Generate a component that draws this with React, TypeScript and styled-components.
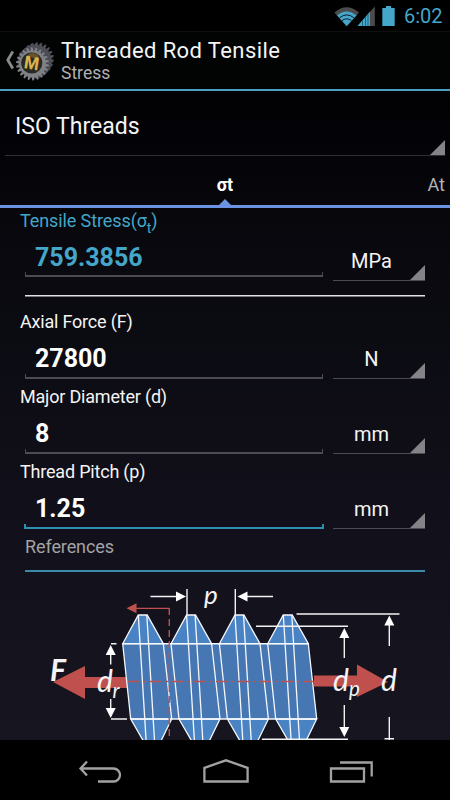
import React from 'react';
import styled, { createGlobalStyle } from 'styled-components';

const Colors = {
  holo: '#44a6c9',
  tab: '#6c93e2',
  white: '#f4f4f4',
  gray: '#a3a3a5',
  line: '#4b4b50',
  red: '#c0504d',
  blue: '#4777b3',
  tooth: '#4a83c4',
};

type FieldData = {
  label: React.ReactNode;
  value: string;
  unit: string;
  result?: boolean;
  focused?: boolean;
};

const result: FieldData = {
  label: (
    <>
      Tensile Stress(σ<sub>t</sub>)
    </>
  ),
  value: '759.3856',
  unit: 'MPa',
  result: true,
};

const inputs: FieldData[] = [
  { label: 'Axial Force (F)', value: '27800', unit: 'N' },
  { label: 'Major Diameter (d)', value: '8', unit: 'mm' },
  { label: 'Thread Pitch (p)', value: '1.25', unit: 'mm', focused: true },
];

const Field: React.FC<FieldData> = ({ label, value, unit, result, focused }) => (
  <Group $result={result}>
    <Label $result={result}>{label}</Label>
    <FieldRow>
      <Input $result={result} $focused={focused}>
        <span>{value}</span>
      </Input>
      <Unit $result={result}>
        {unit}
        <Corner />
      </Unit>
    </FieldRow>
  </Group>
);

const StatusIcons = () => (
  <svg width="64" height="22" viewBox="333 4 64 22">
    <path d="M334.5 11.5Q346.5 1 359 11.5L356.2 15Q346.5 7.5 337.3 15Z" fill="#4b4b4b" />
    <path d="M337 14.5Q346.5 6.5 356.5 14.5L346.7 25.3Z" fill={Colors.holo} />
    <path d="M339.5 16.8Q346.7 11 354 16.8M342 19.7Q346.7 16 351.5 19.7" stroke="#0b1e27" fill="none" />
    <path d="M374.8 5.5V25H357.5Z" fill="#4b4b4b" />
    <path d="M370 10.8V25H357.5Z" fill={Colors.holo} />
    <path d="M362.5 19V25M365.5 16V25M368 13V25" stroke="#13485e" strokeWidth=".7" />
    <path d="M386 5h5v2h3.7v18H382.3V7H386Z" fill={Colors.holo} />
  </svg>
);

const teeth = Array.from({ length: 22 }, (_, i) => (i * Math.PI * 2) / 22);
const gearPoints = (cx: number, cy: number) =>
  teeth
    .map(a => {
      const at = (r: number, d: number) =>
        `${(cx + r * Math.cos(a + d)).toFixed(2)},${(cy + r * Math.sin(a + d)).toFixed(2)}`;
      return [at(13.4, 0), at(16.6, 0.06), at(16.6, 0.15), at(13.4, 0.21)].join(' ');
    })
    .join(' ');

const GearLogo = () => (
  <svg width="40" height="42" viewBox="15 40 40 42">
    {[5, 4, 3, 2, 1].map(i => (
      <polygon key={i} points={gearPoints(32.5 + i, 63.8 - i)} fill={i % 2 ? '#43444c' : '#55565f'} />
    ))}
    <polygon points={gearPoints(32.5, 63.8)} fill="#808186" />
    <circle cx="31.8" cy="63" r="10.6" fill="#2a2824" />
    <path d="M26 56.5Q32 50 39 56L37 60L31 57Z" fill="#665528" />
    <text x="24.6" y="69.8" transform="rotate(9 32 63)" fontFamily="Liberation Sans" fontWeight="700" fontSize="18" fill="#806321">
      M
    </text>
    <text x="24" y="69" transform="rotate(9 32 63)" fontFamily="Liberation Sans" fontWeight="700" fontSize="18" fill="#d8b550">
      M
    </text>
  </svg>
);

const Head: React.FC<{ x: number; y: number; r: number; color?: string }> = ({
  x,
  y,
  r,
  color = '#fff',
}) => <path d="M0 0L-5 10H5Z" transform={`translate(${x} ${y}) rotate(${r})`} fill={color} />;

const ThreadDiagram = () => {
  const starts = [0, 48.3, 96.7, 145];
  return (
    <svg width="450" height="168" viewBox="0 572 450 168">
      <path d="M53 682L85 666V677H128V688H85V699Z" fill={Colors.red} />
      <path d="M314 675.5H357V664.5L388 682L357 697V686.5H314Z" fill={Colors.red} />
      <polygon points="122.7,643.7 308.3,643.7 317,719 130.7,719" fill={Colors.blue} />
      {starts.map(s => (
        <g key={s} transform={`translate(${s} 0)`} stroke="#f5f8fc" strokeWidth="1.3">
          <path d="M122.7 643.7L138.3 615H147.2L163.3 643.7Z" fill={Colors.tooth} />
          <path d="M130.7 719L144.5 743H160L171.7 719Z" fill={Colors.tooth} />
          <path d="M138.3 615L146.2 742M146.8 615L154.6 742" />
          <path d="M122.7 643.7L130.7 719M163.3 643.7L171.7 719" />
        </g>
      ))}
      <path d="M122.7 643.7H308.3M130.7 719H317" stroke="#f5f8fc" strokeWidth="1.4" />
      <path d="M128 681.5H314" stroke={Colors.red} strokeWidth="1.4" strokeDasharray="11 4 3 4" />
      <path d="M136 608.3H169" stroke={Colors.red} strokeWidth="1.3" />
      <path d="M169.3 608V740" stroke={Colors.red} strokeWidth="1.4" strokeDasharray="7 4" />
      <Head x={126.5} y={608.3} r={-90} color={Colors.red} />
      <g stroke="#f2f2f2" strokeWidth="1.4">
        <path d="M150.5 596.5H178M187 589V615M235.3 589V615M246 596.5H273" />
        <path d="M111 643.7H116.5M111 719H127M110.7 652V664.5M110.7 699V710" />
        <path d="M296.5 614H399.5M256 626.3H348M262 739.3H348" />
        <path d="M344.3 636V658M344.3 705V728M389.3 624V646M389.3 717V740M384.5 738.8H394" />
      </g>
      <Head x={186} y={596.5} r={90} />
      <Head x={237.5} y={596.5} r={-90} />
      <Head x={110.7} y={645} r={0} />
      <Head x={110.7} y={718} r={180} />
      <Head x={344.3} y={628} r={0} />
      <Head x={344.3} y={737} r={180} />
      <Head x={389.3} y={615.5} r={0} />
      <DiagramText x="50" y="681" $bold>F</DiagramText>
      <DiagramText x="97" y="692">d</DiagramText>
      <DiagramText x="112.500" y="697.500" $small>r</DiagramText>
      <DiagramText x="204" y="604" $mid>p</DiagramText>
      <DiagramText x="333" y="690.500">d</DiagramText>
      <DiagramText x="349" y="695.500" $small>p</DiagramText>
      <DiagramText x="381" y="690.500">d</DiagramText>
    </svg>
  );
};

const App = () => (
  <Screen>
    <GlobalStyle />
    <StatusBar>
      <StatusIcons />
      <Clock>6:02</Clock>
    </StatusBar>
    <ActionBar>
      <svg width="10" height="20" viewBox="5 52 10 20">
        <path d="M12.8 52.5L7.8 61L12.8 69.5" fill="none" stroke="#8b8b8b" strokeWidth="2.8" />
      </svg>
      <GearLogo />
      <Titles>
        <h1>Threaded Rod Tensile</h1>
        <h2>Stress</h2>
      </Titles>
    </ActionBar>
    <Spinner>
      ISO Threads
      <Corner />
    </Spinner>
    <Tabs>
      <Tab $active>σt</Tab>
      <Tab>At</Tab>
    </Tabs>
    <Form>
      <Field {...result} />
      <Divider />
      {inputs.map(input => (
        <Field key={input.value} {...input} />
      ))}
      <References>References</References>
    </Form>
    <ThreadDiagram />
    <NavBar>
      <svg width="46" height="28" viewBox="77 757 46 28">
        <path d="M98 781.5H113.5A6.5 6.5 0 0 0 113.5 768.5H81M87 761.5L80.5 768.5L87 775.5" />
      </svg>
      <svg width="50" height="28" viewBox="200 757 50 28">
        <path d="M203.4 781.5V767.8L225 760.3L246.6 767.8V781.5Z" />
      </svg>
      <svg width="46" height="28" viewBox="328 757 46 28">
        <path d="M331 768.5H364V781.5H331ZM340 762.5H371.7V776.5" />
      </svg>
    </NavBar>
  </Screen>
);

const GlobalStyle = createGlobalStyle`
  body {
    margin: 0;
    background: #000;
  }
  svg {
    display: block;
    flex: none;
  }
`;

const Screen = styled.div`
  width: 450px;
  height: 800px;
  overflow: hidden;
  display: flex;
  flex-direction: column;
  box-sizing: border-box;
  font-family: Roboto, 'Liberation Sans', sans-serif;
  color: ${Colors.white};
  background: linear-gradient(#010104 90px, #09090f 260px, #11101a 500px, #171520 740px);
`;

const StatusBar = styled.div`
  height: 31px;
  flex: none;
  display: flex;
  justify-content: flex-end;
  align-items: center;
  padding-right: 8px;
  background: #000;
`;

const Clock = styled.div`
  width: 38px;
  margin-left: 7px;
  line-height: 32px;
  font-size: 20px;
  color: ${Colors.holo};
`;

const ActionBar = styled.div`
  height: 60px;
  flex: none;
  box-sizing: border-box;
  display: flex;
  align-items: center;
  padding-left: 5px;
  background: #020303;
  border-top: 1px solid #0d0f10;
  border-bottom: 2px solid #4a9fc4;
`;

const Titles = styled.div`
  margin-left: 6px;
  > h1 {
    margin: 0;
    font-size: 22px;
    line-height: 25px;
    font-weight: 400;
    letter-spacing: 0.4px;
    white-space: nowrap;
  }
  > h2 {
    margin: 0;
    font-size: 17.5px;
    line-height: 20px;
    font-weight: 400;
    color: #b0b0b0;
  }
`;

const Corner = styled.i`
  position: absolute;
  right: 0;
  bottom: 0;
  width: 15px;
  height: 15px;
  background: #848488;
  clip-path: polygon(100% 0, 100% 100%, 0 100%);
`;

const Spinner = styled.div`
  position: relative;
  flex: none;
  height: 65px;
  box-sizing: border-box;
  margin: 0 5px;
  padding-left: 10px;
  line-height: 72px;
  font-size: 23px;
  border-bottom: 1px solid #303034;
`;

const Tabs = styled.div`
  position: relative;
  flex: none;
  height: 52px;
  box-sizing: border-box;
  display: grid;
  grid-template-columns: 1fr auto 1fr;
  padding: 0 5px;
  border-bottom: 3px solid ${Colors.tab};
  &::after {
    content: '';
    position: absolute;
    left: 219px;
    bottom: 0;
    width: 12px;
    height: 6px;
    background: ${Colors.tab};
    clip-path: polygon(50% 0, 100% 100%, 0 100%);
  }
`;

const Tab = styled.div<{ $active?: boolean }>`
  grid-column: ${({ $active }) => ($active ? 2 : 3)};
  justify-self: end;
  line-height: 58px;
  font-size: 18px;
  font-weight: ${({ $active }) => ($active ? 700 : 400)};
  color: ${({ $active }) => ($active ? '#fff' : '#b4b4b6')};
`;

const Form = styled.div`
  flex: none;
  height: 364px;
`;

const Group = styled.div<{ $result?: boolean }>`
  height: ${({ $result }) => ($result ? 87 : 75)}px;
`;

const Label = styled.div<{ $result?: boolean }>`
  height: 24px;
  line-height: ${({ $result }) => ($result ? 26 : 24)}px;
  padding-left: 20px;
  font-size: 18px;
  letter-spacing: ${({ $result }) => ($result ? '-0.1px' : '-0.2px')};
  color: ${({ $result }) => ($result ? Colors.holo : Colors.white)};
  > sub {
    font-size: 14px;
    line-height: 0;
    vertical-align: -6px;
  }
`;

const FieldRow = styled.div`
  display: flex;
  gap: 10px;
  padding: 0 25px;
`;

const Input = styled.div<{ $result?: boolean; $focused?: boolean }>`
  width: 298px;
  height: 45px;
  display: flex;
  flex-direction: column;
  color: ${({ $result }) => ($result ? Colors.holo : '#fff')};
  > span {
    height: 40px;
    padding-left: 10px;
    line-height: ${({ $result }) => ($result ? 52 : 50)}px;
    font-size: 25px;
    font-weight: 700;
  }
  &::after {
    content: '';
    height: 3px;
    border: ${({ $focused }) => ($focused ? '2px solid #2f8fb0' : '1px solid #4b4b50')};
    border-top: 0;
    border-bottom-width: 2px;
    margin: ${({ $focused }) => ($focused ? '0 -1px' : '0')};
  }
`;

const Unit = styled.div<{ $result?: boolean }>`
  position: relative;
  width: 92px;
  height: ${({ $result }) => ($result ? 49 : 45)}px;
  box-sizing: border-box;
  padding-right: 15px;
  line-height: ${({ $result }) => ($result ? 59 : 50)}px;
  font-size: 20px;
  text-align: center;
  border-bottom: 1px solid ${Colors.line};
`;

const Divider = styled.div`
  height: 2px;
  margin: 0 25px 13px;
  background: linear-gradient(#e2e2e4 50%, #77777d 50%);
`;

const References = styled.div`
  height: 35px;
  margin: 0 25px;
  line-height: 24px;
  font-size: 18px;
  letter-spacing: -0.1px;
  color: ${Colors.gray};
  border-bottom: 2px solid #3a8aa8;
`;

const DiagramText = styled.text<{ $bold?: boolean; $small?: boolean; $mid?: boolean }>`
  font-family: Lato, sans-serif;
  font-style: italic;
  font-weight: ${({ $bold }) => ($bold ? 700 : 400)};
  font-size: ${({ $small, $mid }) => ($small ? 20.5 : $mid ? 26 : 30)}px;
  fill: #f4f4f6;
`;

const NavBar = styled.div`
  position: relative;
  flex: none;
  height: 60px;
  box-sizing: border-box;
  display: flex;
  justify-content: space-between;
  padding: 17px 76px 0 77px;
  background: #000;
  path {
    fill: none;
    stroke: #a2a2a2;
    stroke-width: 2.3;
  }
`;

export default App;
